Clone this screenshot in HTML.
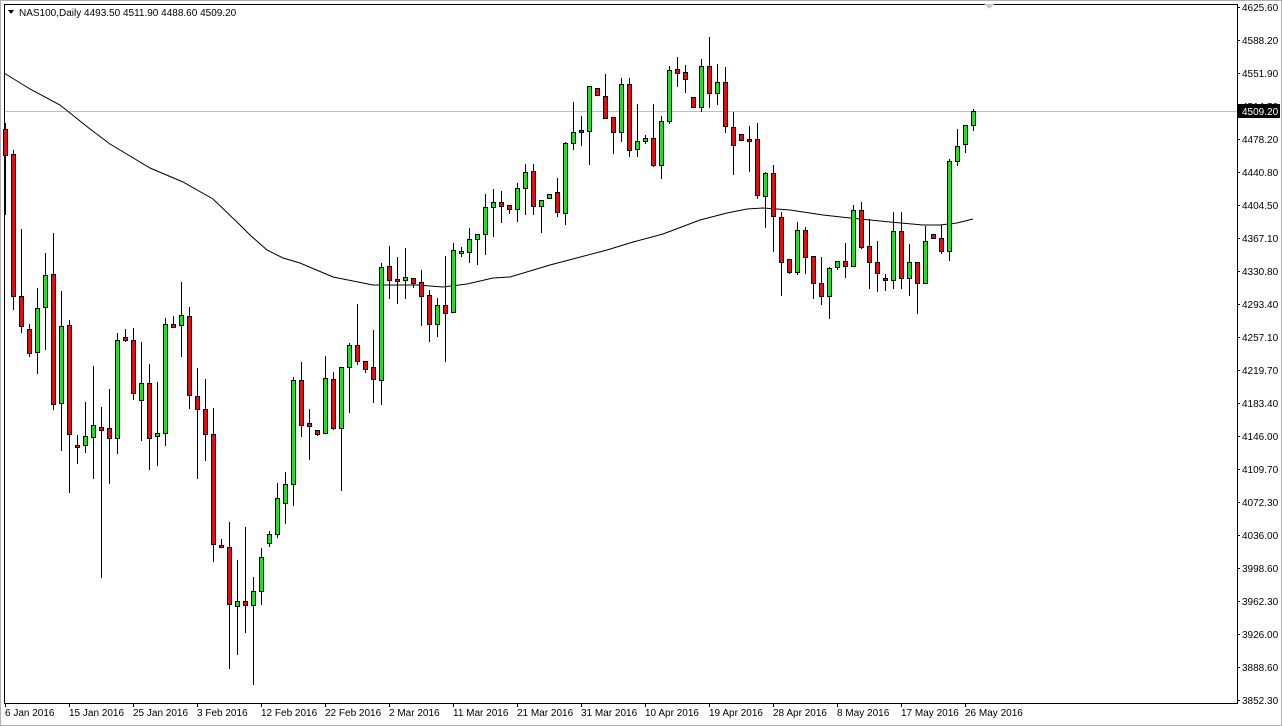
<!DOCTYPE html>
<html><head><meta charset="utf-8"><style>
html,body{margin:0;padding:0;background:#fff;}
svg{display:block;}
text{font-family:"Liberation Sans",sans-serif;font-size:10px;fill:#000;}
</style></head><body>
<svg width="1282" height="726" viewBox="0 0 1282 726" xmlns="http://www.w3.org/2000/svg" shape-rendering="crispEdges">
<rect x="0.5" y="0.5" width="1281" height="725" fill="#fff" stroke="#b0b0b0"/>
<rect x="4.5" y="4.5" width="1233" height="699" fill="#fff" stroke="#000"/>
<line x1="5" y1="111.5" x2="1237" y2="111.5" stroke="#c0c0c0"/>
<polygon points="984,4 994,4 989,9" fill="#c8c8c8"/>
<g stroke="#000">
<path d="M1237 7.5h3M1237 40.5h3M1237 73.5h3M1237 106.5h3M1237 139.5h3M1237 172.5h3M1237 205.5h3M1237 238.5h3M1237 271.5h3M1237 304.5h3M1237 337.5h3M1237 370.5h3M1237 403.5h3M1237 436.5h3M1237 469.5h3M1237 502.5h3M1237 535.5h3M1237 568.5h3M1237 601.5h3M1237 634.5h3M1237 667.5h3M1237 700.5h3"/>
<path d="M5.5 703v4M69.5 703v4M133.5 703v4M197.5 703v4M261.5 703v4M325.5 703v4M389.5 703v4M453.5 703v4M517.5 703v4M581.5 703v4M645.5 703v4M709.5 703v4M773.5 703v4M837.5 703v4M901.5 703v4M965.5 703v4"/>
</g>
<g>
<text x="1242" y="11">4625.60</text><text x="1242" y="44">4588.20</text><text x="1242" y="77">4551.90</text><text x="1242" y="110">4514.50</text><text x="1242" y="143">4478.20</text><text x="1242" y="176">4440.80</text><text x="1242" y="209">4404.50</text><text x="1242" y="242">4367.10</text><text x="1242" y="275">4330.80</text><text x="1242" y="308">4293.40</text><text x="1242" y="341">4257.10</text><text x="1242" y="374">4219.70</text><text x="1242" y="407">4183.40</text><text x="1242" y="440">4146.00</text><text x="1242" y="473">4109.70</text><text x="1242" y="506">4072.30</text><text x="1242" y="539">4036.00</text><text x="1242" y="572">3998.60</text><text x="1242" y="605">3962.30</text><text x="1242" y="638">3926.00</text><text x="1242" y="671">3888.60</text><text x="1242" y="704">3852.30</text>
</g>
<rect x="1238" y="104" width="42" height="14" fill="#000"/>
<text x="1242" y="115" style="fill:#fff">4509.20</text>
<g>
<text x="5" y="716">6 Jan 2016</text><text x="69" y="716">15 Jan 2016</text><text x="133" y="716">25 Jan 2016</text><text x="197" y="716">3 Feb 2016</text><text x="261" y="716">12 Feb 2016</text><text x="325" y="716">22 Feb 2016</text><text x="389" y="716">2 Mar 2016</text><text x="453" y="716">11 Mar 2016</text><text x="517" y="716">21 Mar 2016</text><text x="581" y="716">31 Mar 2016</text><text x="645" y="716">10 Apr 2016</text><text x="709" y="716">19 Apr 2016</text><text x="773" y="716">28 Apr 2016</text><text x="837" y="716">8 May 2016</text><text x="901" y="716">17 May 2016</text><text x="965" y="716">26 May 2016</text>
</g>
<polygon points="8,10 14,10 11,14" fill="#000"/>
<text x="19" y="16">NAS100,Daily  4493.50 4511.90 4488.60 4509.20</text>
<path d="M4,73 L30,89 L60,105 L90,129 L110,144 L150,168 L183,182 L213,199 L240,225 L250,235 L267,250 L283,258 L300,263 L333,277 L373,285 L417,285 L443,287 L467,284 L493,278 L510,277 L550,265 L607,250 L633,242 L663,234 L700,220 L727,213 L747,209 L763,208 L790,210 L823,215 L850,218 L890,222 L923,225 L940,225 L957,223 L973,219" fill="none" stroke="#000" stroke-width="1" shape-rendering="auto"/>
<g stroke="#000" stroke-width="1">
<path d="M5.5 123V215M13.5 150V310M21.5 229V333M29.5 324V357M37.5 288V374M45.5 253V350M53.5 233V410M61.5 291V451M69.5 320V493M77.5 435V464M85.5 402V453M93.5 366V479M101.5 407V578M109.5 389V484M117.5 333V454M125.5 329V342M133.5 328V400M141.5 342V441M149.5 364V470M157.5 382V466M165.5 318V446M173.5 316V327M181.5 282V357M189.5 307V409M197.5 368V479M205.5 379V461M213.5 408V562M221.5 539V548M229.5 522V669M237.5 560V655M245.5 527V633M253.5 577V685M261.5 548V605M269.5 531V547M277.5 483V538M285.5 472V524M293.5 377V506M301.5 362V437M309.5 409V460M317.5 430V436M325.5 356V433M333.5 372V430M341.5 367V491M349.5 343V413M357.5 304V365M365.5 361V373M373.5 330V403M381.5 263V405M389.5 246V299M397.5 257V304M405.5 248V299M413.5 278V288M421.5 270V326M429.5 290V342M437.5 298V337M445.5 256V362M453.5 243V312M461.5 247V257M469.5 228V263M477.5 234V265M485.5 194V255M493.5 189V237M501.5 191V223M509.5 205V214M517.5 183V222M525.5 164V215M533.5 164V215M541.5 200V233M549.5 194V198M557.5 178V217M565.5 142V225M573.5 102V150M581.5 116V146M589.5 86V165M597.5 88V95M605.5 74V119M613.5 117V154M621.5 78V142M629.5 78V157M637.5 104V157M645.5 135V144M653.5 104V167M661.5 116V179M669.5 66V124M677.5 57V87M685.5 65V93M693.5 97V107M701.5 59V112M709.5 37V108M717.5 64V105M725.5 67V133M733.5 112V175M741.5 134V140M749.5 126V172M757.5 123V199M765.5 172V228M773.5 165V252M781.5 212V296M789.5 259V274M797.5 222V275M805.5 227V274M813.5 256V299M821.5 257V305M829.5 267V319M837.5 261V270M845.5 243V278M853.5 205V266M861.5 202V249M869.5 219V289M877.5 241V292M885.5 274V291M893.5 212V289M901.5 212V289M909.5 244V296M917.5 262V314M925.5 226V283M933.5 234V238M941.5 225V254M949.5 159V261M957.5 129V166M965.5 125V153M973.5 109V131"/>
</g>
<g stroke="#000" stroke-width="1" fill="#dd1111">
<rect x="3.5" y="129.5" width="4" height="26"/><rect x="11.5" y="154.5" width="4" height="142"/><rect x="19.5" y="296.5" width="4" height="30"/><rect x="27.5" y="329.5" width="4" height="24"/><rect x="51.5" y="274.5" width="4" height="130"/><rect x="67.5" y="325.5" width="4" height="109"/><rect x="75.5" y="445.5" width="4" height="2"/><rect x="99.5" y="427.5" width="4" height="3"/><rect x="107.5" y="428.5" width="4" height="10"/><rect x="123.5" y="337.5" width="4" height="3"/><rect x="131.5" y="340.5" width="4" height="53"/><rect x="147.5" y="383.5" width="4" height="55"/><rect x="171.5" y="324.5" width="4" height="3"/><rect x="187.5" y="316.5" width="4" height="79"/><rect x="195.5" y="396.5" width="4" height="13"/><rect x="203.5" y="409.5" width="4" height="25"/><rect x="211.5" y="434.5" width="4" height="110"/><rect x="219.5" y="545.5" width="4" height="2"/><rect x="227.5" y="547.5" width="4" height="57"/><rect x="243.5" y="601.5" width="4" height="4"/><rect x="299.5" y="380.5" width="4" height="45"/><rect x="307.5" y="423.5" width="4" height="3"/><rect x="315.5" y="430.5" width="4" height="4"/><rect x="331.5" y="379.5" width="4" height="49"/><rect x="355.5" y="345.5" width="4" height="16"/><rect x="363.5" y="361.5" width="4" height="8"/><rect x="371.5" y="367.5" width="4" height="12"/><rect x="387.5" y="266.5" width="4" height="14"/><rect x="395.5" y="279.5" width="4" height="2"/><rect x="411.5" y="278.5" width="4" height="5"/><rect x="419.5" y="282.5" width="4" height="14"/><rect x="427.5" y="295.5" width="4" height="29"/><rect x="443.5" y="305.5" width="4" height="8"/><rect x="499.5" y="202.5" width="4" height="4"/><rect x="507.5" y="205.5" width="4" height="4"/><rect x="531.5" y="171.5" width="4" height="35"/><rect x="555.5" y="192.5" width="4" height="20"/><rect x="579.5" y="130.5" width="4" height="2"/><rect x="595.5" y="88.5" width="4" height="7"/><rect x="603.5" y="96.5" width="4" height="22"/><rect x="611.5" y="117.5" width="4" height="15"/><rect x="627.5" y="84.5" width="4" height="66"/><rect x="651.5" y="138.5" width="4" height="27"/><rect x="675.5" y="69.5" width="4" height="4"/><rect x="683.5" y="72.5" width="4" height="7"/><rect x="691.5" y="97.5" width="4" height="10"/><rect x="707.5" y="66.5" width="4" height="27"/><rect x="723.5" y="82.5" width="4" height="44"/><rect x="731.5" y="127.5" width="4" height="18"/><rect x="739.5" y="134.5" width="4" height="6"/><rect x="747.5" y="139.5" width="4" height="2"/><rect x="755.5" y="139.5" width="4" height="56"/><rect x="771.5" y="173.5" width="4" height="43"/><rect x="779.5" y="217.5" width="4" height="45"/><rect x="787.5" y="259.5" width="4" height="13"/><rect x="803.5" y="230.5" width="4" height="27"/><rect x="811.5" y="256.5" width="4" height="27"/><rect x="819.5" y="283.5" width="4" height="13"/><rect x="843.5" y="261.5" width="4" height="5"/><rect x="859.5" y="210.5" width="4" height="37"/><rect x="867.5" y="246.5" width="4" height="16"/><rect x="875.5" y="262.5" width="4" height="11"/><rect x="883.5" y="278.5" width="4" height="2"/><rect x="899.5" y="231.5" width="4" height="47"/><rect x="915.5" y="262.5" width="4" height="21"/><rect x="931.5" y="234.5" width="4" height="4"/><rect x="939.5" y="238.5" width="4" height="13"/>
</g>
<g stroke="#000" stroke-width="1" fill="#22dd22">
<rect x="35.5" y="308.5" width="4" height="44"/><rect x="43.5" y="275.5" width="4" height="32"/><rect x="59.5" y="326.5" width="4" height="77"/><rect x="83.5" y="436.5" width="4" height="9"/><rect x="91.5" y="425.5" width="4" height="12"/><rect x="115.5" y="340.5" width="4" height="98"/><rect x="139.5" y="383.5" width="4" height="17"/><rect x="155.5" y="433.5" width="4" height="3"/><rect x="163.5" y="324.5" width="4" height="109"/><rect x="179.5" y="315.5" width="4" height="10"/><rect x="235.5" y="601.5" width="4" height="5"/><rect x="251.5" y="591.5" width="4" height="14"/><rect x="259.5" y="557.5" width="4" height="34"/><rect x="267.5" y="534.5" width="4" height="9"/><rect x="275.5" y="498.5" width="4" height="36"/><rect x="283.5" y="484.5" width="4" height="19"/><rect x="291.5" y="380.5" width="4" height="104"/><rect x="323.5" y="378.5" width="4" height="55"/><rect x="339.5" y="367.5" width="4" height="61"/><rect x="347.5" y="345.5" width="4" height="22"/><rect x="379.5" y="267.5" width="4" height="113"/><rect x="403.5" y="277.5" width="4" height="3"/><rect x="435.5" y="305.5" width="4" height="19"/><rect x="451.5" y="250.5" width="4" height="62"/><rect x="459.5" y="251.5" width="4" height="2"/><rect x="467.5" y="239.5" width="4" height="13"/><rect x="475.5" y="234.5" width="4" height="5"/><rect x="483.5" y="207.5" width="4" height="27"/><rect x="491.5" y="202.5" width="4" height="5"/><rect x="515.5" y="188.5" width="4" height="21"/><rect x="523.5" y="172.5" width="4" height="16"/><rect x="539.5" y="200.5" width="4" height="6"/><rect x="547.5" y="194.5" width="4" height="4"/><rect x="563.5" y="143.5" width="4" height="70"/><rect x="571.5" y="132.5" width="4" height="11"/><rect x="587.5" y="86.5" width="4" height="45"/><rect x="619.5" y="84.5" width="4" height="48"/><rect x="635.5" y="141.5" width="4" height="8"/><rect x="643.5" y="138.5" width="4" height="3"/><rect x="659.5" y="121.5" width="4" height="44"/><rect x="667.5" y="70.5" width="4" height="51"/><rect x="699.5" y="66.5" width="4" height="41"/><rect x="715.5" y="82.5" width="4" height="11"/><rect x="763.5" y="173.5" width="4" height="23"/><rect x="795.5" y="230.5" width="4" height="42"/><rect x="827.5" y="268.5" width="4" height="28"/><rect x="835.5" y="261.5" width="4" height="6"/><rect x="851.5" y="210.5" width="4" height="56"/><rect x="891.5" y="231.5" width="4" height="49"/><rect x="907.5" y="262.5" width="4" height="16"/><rect x="923.5" y="241.5" width="4" height="42"/><rect x="947.5" y="161.5" width="4" height="90"/><rect x="955.5" y="146.5" width="4" height="15"/><rect x="963.5" y="125.5" width="4" height="19"/><rect x="971.5" y="111.5" width="4" height="14"/>
</g>
</svg>
</body></html>
